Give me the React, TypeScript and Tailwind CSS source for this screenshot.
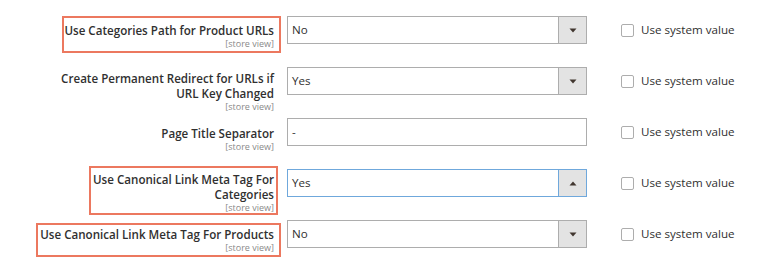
import React from "react";

type Row = {
  lines: string[];
  value: string;
  kind: "select" | "input";
  focused?: boolean;
  boxed?: boolean;
  wrap: string;
};

const rows: Row[] = [
  {
    lines: ["Use Categories Path for Product URLs"],
    value: "No",
    kind: "select",
    boxed: true,
    wrap: "mt-0 pt-[5px] pb-[2px] pl-0 pr-[5px] mr-0",
  },
  {
    lines: ["Create Permanent Redirect for URLs if", "URL Key Changed"],
    value: "Yes",
    kind: "select",
    wrap: "mt-0 pt-[2px] pb-0 pl-0 pr-[5px] mr-0",
  },
  {
    lines: ["Page Title Separator"],
    value: "-",
    kind: "input",
    wrap: "mt-0 pt-[6px] pb-0 pl-0 pr-[5px] mr-0",
  },
  {
    lines: ["Use Canonical Link Meta Tag For", "Categories"],
    value: "Yes",
    kind: "select",
    focused: true,
    boxed: true,
    wrap: "-mt-[3px] pt-[4px] pb-0 pl-[2px] pr-[2px] mr-[3px]",
  },
  {
    lines: ["Use Canonical Link Meta Tag For Products"],
    value: "No",
    kind: "select",
    boxed: true,
    wrap: "mt-[3px] pt-[2px] pb-[2px] pl-[2px] pr-[5px] mr-0",
  },
];

const Arrow = ({ up }: { up?: boolean }) => (
  <svg width="8" height="5" viewBox="0 0 8 5" className="block">
    {up ? (
      <polygon points="0.5,4.5 7.5,4.5 4,0.5" fill="#41362f" />
    ) : (
      <polygon points="0.5,0.5 7.5,0.5 4,4.5" fill="#41362f" />
    )}
  </svg>
);

const Field = ({ row }: { row: Row }) => {
  if (row.kind === "input") {
    return (
      <div className="flex h-[28px] w-[300px] items-center border border-[#adadad] bg-white pl-[4px] text-[11.6px] text-[#303030]">
        {row.value}
      </div>
    );
  }
  const border = row.focused ? "border-[#6fa8dc]" : "border-[#adadad]";
  return (
    <div className={`flex h-[28px] w-[300px] border bg-white ${border}`}>
      <div className="flex flex-1 items-center pl-[4px] text-[11.6px] text-[#303030]">{row.value}</div>
      <div
        className={`flex w-[28px] items-center justify-center border-l bg-[#e3e3e3] ${border}`}
      >
        <Arrow up={row.focused} />
      </div>
    </div>
  );
};

export default function App() {
  return (
    <div
      className="h-[265px] w-[768px] overflow-hidden bg-white pt-[16px]"
      style={{ fontFamily: '"Open Sans", "Liberation Sans", sans-serif' }}
    >
      {rows.map((row, i) => (
        <div key={i} className="flex h-[51px] items-start">
          <div className="flex w-[281px] shrink-0 justify-end">
            <div
              className={`border-2 text-right ${row.boxed ? "border-[#ec785f]" : "border-transparent"} ${row.wrap}`}
            >
              {row.lines.map((l) => (
                <div
                  key={l}
                  className="whitespace-nowrap text-[11.6px] font-semibold leading-[15px] text-[#303030]"
                >
                  {l}
                </div>
              ))}
              <div className="whitespace-nowrap text-[9px] leading-[11px] text-[#8a8a8a]">
                [store view]
              </div>
            </div>
          </div>
          <div className="ml-[6px] flex items-center">
            <Field row={row} />
            <div className="ml-[34px] flex items-center gap-[7px]">
              <div className="mt-[2px] h-[13px] w-[13px] rounded-[2px] border border-[#adadad] bg-white" />
              <span className="text-[11.6px] text-[#303030]">Use system value</span>
            </div>
          </div>
        </div>
      ))}
    </div>
  );
}
